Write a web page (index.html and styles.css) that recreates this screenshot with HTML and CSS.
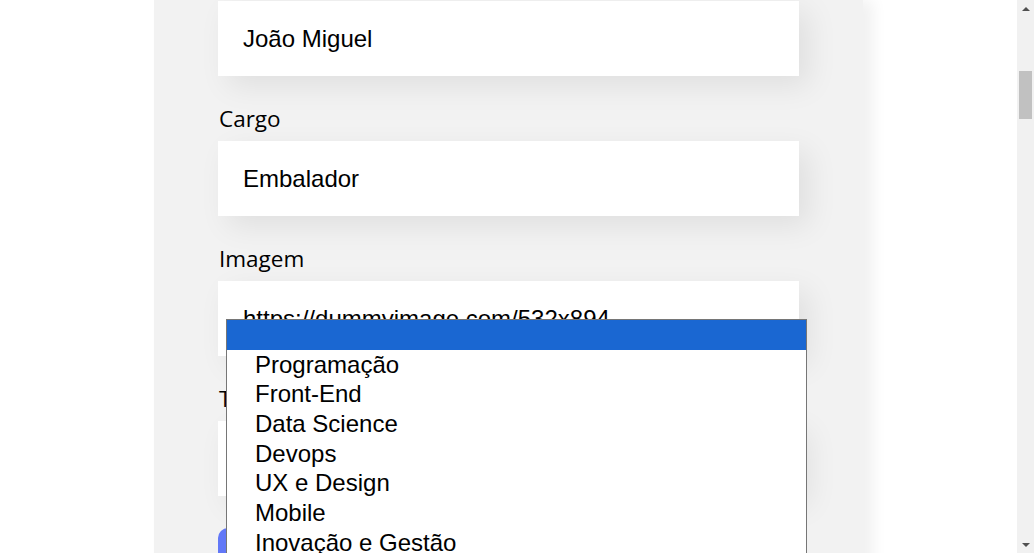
FILE: index.html
```html
<!DOCTYPE html>
<html lang="pt-BR">
<head>
<meta charset="utf-8">
<title>Organo - Formulário</title>
<link rel="stylesheet" href="styles.css">
</head>
<body>
<div class="viewport">
  <main class="page">
    <section class="formulario">
      <form class="form">
        <div class="campo">
          <input class="campo-input" type="text" value="João Miguel">
        </div>
        <div class="campo">
          <label class="campo-label">Cargo</label>
          <input class="campo-input" type="text" value="Embalador">
        </div>
        <div class="campo">
          <label class="campo-label">Imagem</label>
          <input class="campo-input" type="text" value="https://dummyimage.com/532x894">
        </div>
        <div class="campo">
          <label class="campo-label">Time</label>
          <div class="campo-input campo-select"></div>
        </div>
        <button class="botao" type="button">Criar Card</button>
      </form>
    </section>
    <div class="dropdown">
      <div class="opcao opcao-ativa"></div>
      <div class="opcao">Programação</div>
      <div class="opcao">Front-End</div>
      <div class="opcao">Data Science</div>
      <div class="opcao">Devops</div>
      <div class="opcao">UX e Design</div>
      <div class="opcao">Mobile</div>
      <div class="opcao">Inovação e Gestão</div>
    </div>
  </main>
  <div class="scrollbar">
    <div class="scroll-arrow scroll-up"></div>
    <div class="scroll-track">
      <div class="scroll-thumb"></div>
    </div>
    <div class="scroll-arrow scroll-down"></div>
  </div>
</div>
</body>
</html>
```

FILE: styles.css
```css
* {
  box-sizing: border-box;
}

html, body {
  margin: 0;
  padding: 0;
  width: 1034px;
  height: 553px;
  overflow: hidden;
  background: #ffffff;
}

.viewport {
  display: flex;
  width: 1034px;
  height: 553px;
}

.page {
  position: relative;
  width: 1017px;
  height: 553px;
  overflow: hidden;
  background: #ffffff;
}

.formulario {
  display: flex;
  justify-content: center;
}

.form {
  width: 709px;
  background: #f2f2f2;
  padding: 1px 64px 40px 64px;
  box-shadow: 10px 0 14px rgba(0, 0, 0, 0.06);
  display: flex;
  flex-direction: column;
  gap: 25px;
  font-family: "Open Sans", "Noto Sans", sans-serif;
}

.campo {
  display: flex;
  flex-direction: column;
  gap: 8px;
}

.campo-label {
  display: block;
  font-size: 22.5px;
  line-height: 29px;
  padding-top: 3px;
  color: #000000;
  margin-left: 1px;
}

.campo-input {
  display: block;
  width: 581px;
  height: 75px;
  background: #ffffff;
  border: none;
  outline: none;
  padding: 0 24px 0 25px;
  font-family: "Liberation Sans", Arial, sans-serif;
  font-size: 24px;
  color: #000000;
  box-shadow: 10px 10px 30px rgba(0, 0, 0, 0.08);
  margin: 0;
}

.botao {
  align-self: flex-start;
  margin-top: 7px;
  background: #6278f7;
  border: none;
  border-radius: 10px;
  padding: 32px;
  color: #ffffff;
  font-family: "Open Sans", sans-serif;
  font-weight: 700;
  font-size: 18px;
}

.dropdown {
  position: absolute;
  left: 226px;
  top: 319px;
  width: 581px;
  height: 260px;
  background: #ffffff;
  border: 1px solid #767676;
  font-family: "Liberation Sans", Arial, sans-serif;
  font-size: 24px;
  color: #000000;
}

.opcao {
  height: 29.7px;
  line-height: 30px;
  padding-left: 28px;
  white-space: nowrap;
}

.opcao-ativa {
  background: #1a67d2;
}

.scrollbar {
  width: 17px;
  height: 553px;
  background: #f1f1f1;
  display: flex;
  flex-direction: column;
}

.scroll-arrow {
  height: 17px;
  display: flex;
  align-items: center;
  justify-content: center;
}

.scroll-up::before {
  content: "";
  border-left: 4px solid transparent;
  border-right: 4px solid transparent;
  border-bottom: 4px solid #505050;
  margin-top: 1px;
}

.scroll-down::before {
  content: "";
  border-left: 4px solid transparent;
  border-right: 4px solid transparent;
  border-top: 4px solid #505050;
  margin-top: 1px;
}

.scroll-track {
  flex: 1;
  padding: 54px 2px 0 2px;
}

.scroll-thumb {
  height: 48px;
  background: #c1c1c1;
}
```
